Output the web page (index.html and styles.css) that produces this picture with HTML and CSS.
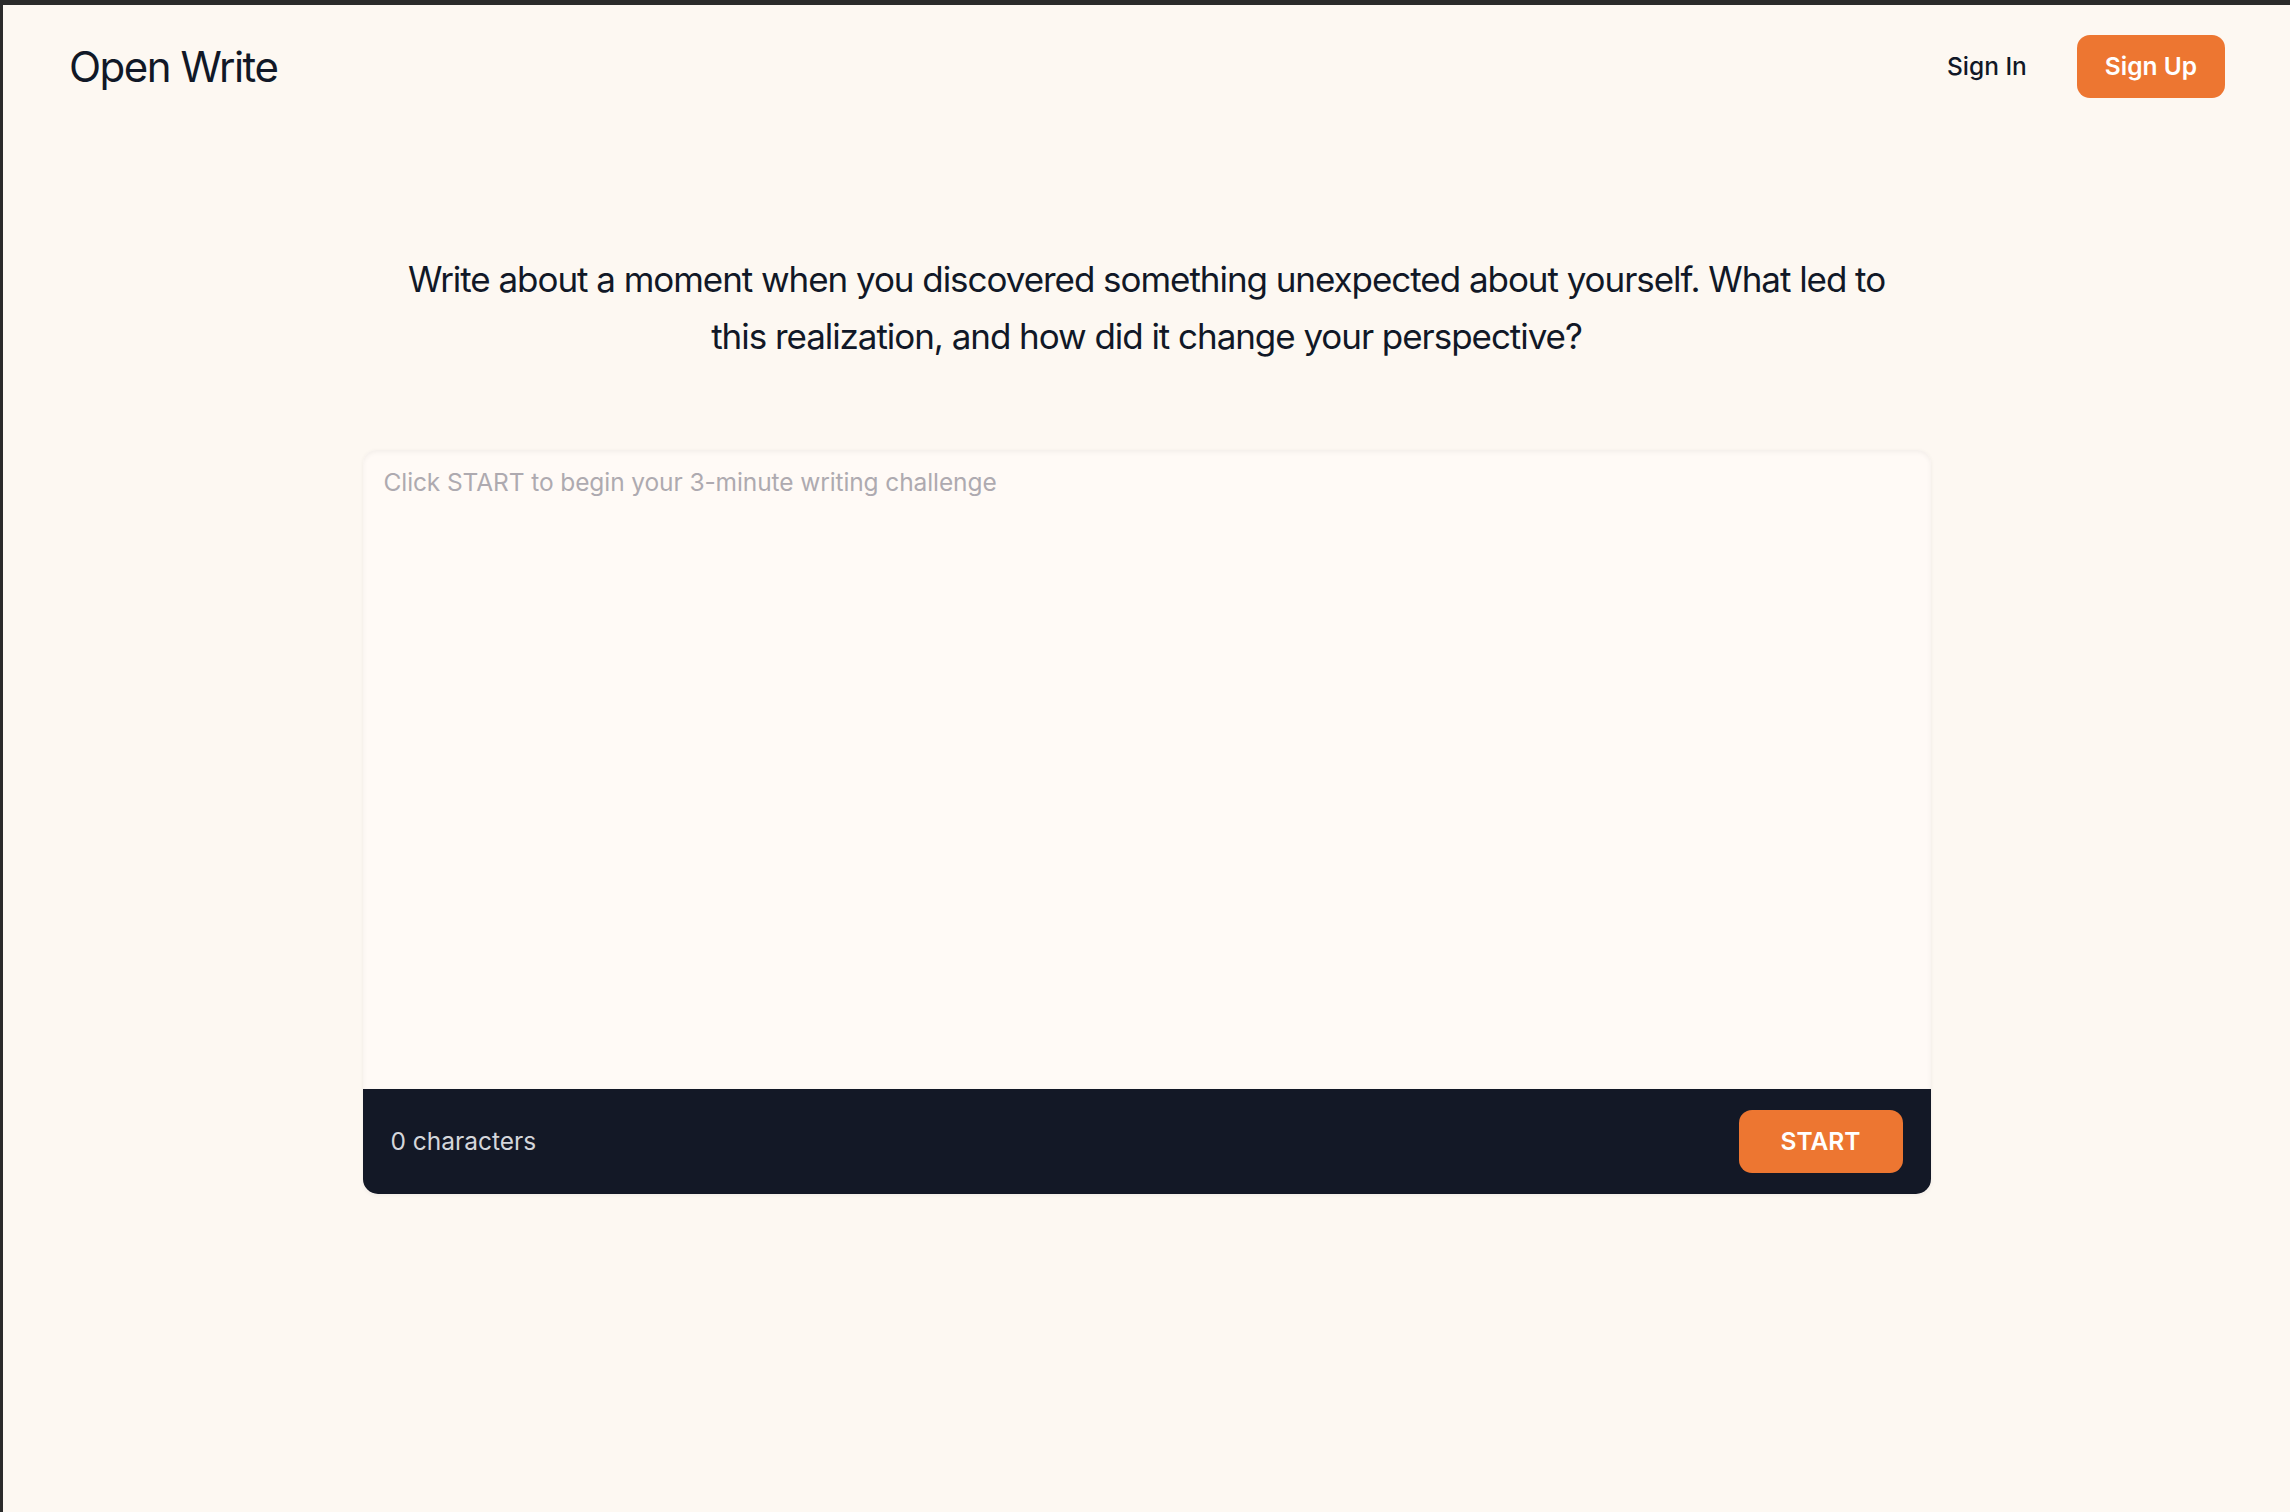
FILE: index.html
```html
<!DOCTYPE html>
<html lang="en">
<head>
<meta charset="utf-8">
<title>Open Write</title>
<link rel="stylesheet" href="styles.css">
</head>
<body>
<div class="page">
  <header class="header">
    <div class="brand">Open Write</div>
    <nav class="nav">
      <a class="signin" href="#">Sign In</a>
      <a class="signup" href="#">Sign Up</a>
    </nav>
  </header>
  <main class="main">
    <p class="prompt">Write about a moment when you discovered something unexpected about yourself. What led to this realization, and how did it change your perspective?</p>
    <section class="editor">
      <textarea class="area" placeholder="Click START to begin your 3-minute writing challenge" disabled></textarea>
      <div class="footer">
        <span class="count">0 characters</span>
        <button class="start" type="button">START</button>
      </div>
    </section>
  </main>
</div>
</body>
</html>
```
FILE: styles.css
```css
* { box-sizing: border-box; }
html, body { margin: 0; padding: 0; }
body {
  background: #2b2b2b;
  font-family: Inter, "Noto Sans", "Liberation Sans", sans-serif;
  color: #111827;
}
.page {
  min-height: 1512px;
  height: 1512px;
  background: #fdf8f2;
  border-top: 5px solid #2b2b2b;
  border-left: 3px solid #2b2b2b;
  display: flex;
  flex-direction: column;
  overflow: hidden;
}
.header {
  display: flex;
  align-items: center;
  justify-content: space-between;
  padding: 30px 65px 27px 66px;
}
.brand {
  font-size: 42px;
  line-height: 56px;
  font-weight: 400;
  letter-spacing: -1.5px;
  color: #111827;
}
.nav {
  display: flex;
  align-items: center;
  gap: 50px;
}
.signin {
  font-size: 24.5px;
  line-height: 35px;
  font-weight: 500;
  color: #111827;
  text-decoration: none;
}
.signup {
  display: inline-block;
  background: #ed7631;
  color: #ffffff;
  font-size: 24.5px;
  line-height: 35px;
  font-weight: 600;
  padding: 14px 28px;
  border-radius: 13px;
  text-decoration: none;
}
.main {
  display: flex;
  flex-direction: column;
  align-items: center;
  padding-top: 126px;
}
.prompt {
  margin: 0;
  max-width: 1500px;
  text-align: center;
  font-size: 35px;
  line-height: 57px;
  font-weight: 400;
  letter-spacing: -1.05px;
  color: #111827;
}
.editor {
  margin-top: 85px;
  width: 1568px;
  border-radius: 14px;
  background: #fffaf6;
  box-shadow: 0 1px 4px rgba(0,0,0,0.06);
  display: flex;
  flex-direction: column;
}
.area {
  display: block;
  width: 100%;
  height: 639px;
  resize: none;
  border: none;
  outline: none;
  background: #fffaf6;
  border-radius: 14px 14px 0 0;
  box-shadow: inset 0 2px 5px rgba(0,0,0,0.05);
  padding: 15px 21px;
  font-family: Inter, "Noto Sans", "Liberation Sans", sans-serif;
  font-size: 24.5px;
  line-height: 35px;
  letter-spacing: -0.1px;
  color: #111827;
}
.area::placeholder { color: #aeaab0; }
.footer {
  background: #131826;
  border-radius: 0 0 15px 15px;
  display: flex;
  align-items: center;
  justify-content: space-between;
  padding: 21px 28px;
}
.count {
  font-size: 24.5px;
  line-height: 35px;
  color: #d4d6db;
}
.start {
  background: #ed7631;
  color: #ffffff;
  border: none;
  border-radius: 13px;
  font-family: Inter, "Noto Sans", "Liberation Sans", sans-serif;
  font-size: 24.5px;
  line-height: 35px;
  font-weight: 600;
  padding: 14px 42px;
  letter-spacing: 0;
  cursor: pointer;
}
```
